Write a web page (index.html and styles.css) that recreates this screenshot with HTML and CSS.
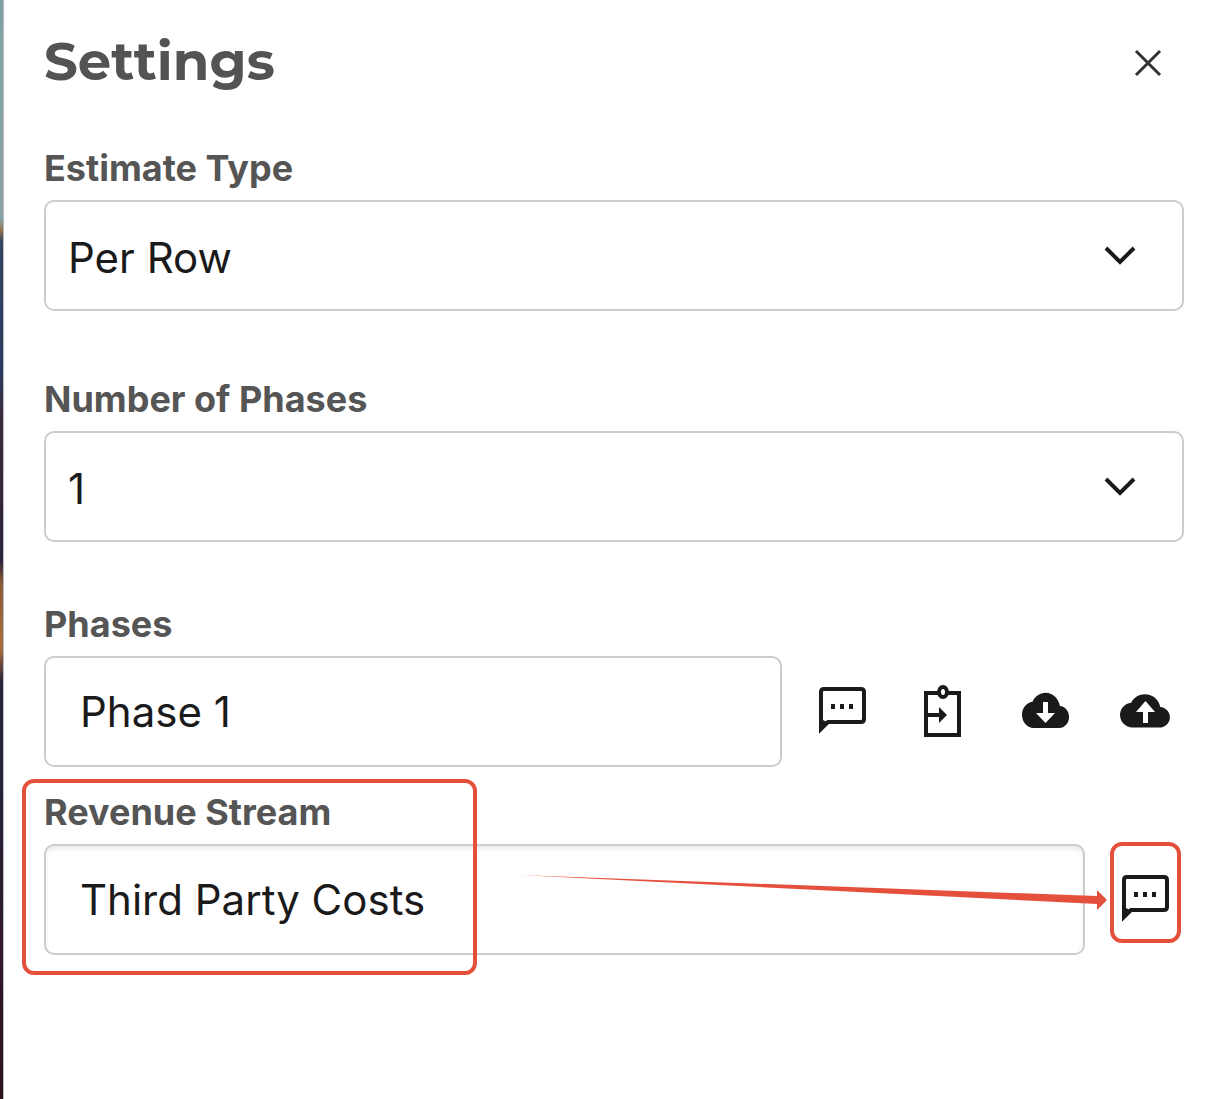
FILE: index.html
```html
<!DOCTYPE html>
<html lang="en">
<head>
<meta charset="utf-8">
<meta name="viewport" content="width=device-width, initial-scale=1">
<title>Settings</title>
<link rel="stylesheet" href="styles.css">
</head>
<body>
<svg class="sprite" aria-hidden="true">
  <symbol id="chat" viewBox="0 0 56 56">
    <path d="M8 45V8q0-3 3-3h37q3 0 3 3v27q0 3-3 3H15z" fill="none" stroke="currentColor" stroke-width="4"/>
    <path d="M6 34v14l10-9z" fill="currentColor"/>
    <path d="M18 20h4v5h-4zM27 20h4v5h-4zM36 20h4v5h-4z" fill="currentColor"/>
  </symbol>
  <symbol id="chevron" viewBox="0 0 32 20">
    <path d="M2 2l14 14L30 2" fill="none" stroke="currentColor" stroke-width="4"/>
  </symbol>
</svg>
<div class="app">
  <div class="backdrop"></div>
  <main class="panel">
    <header class="header">
      <h1 class="title">Settings</h1>
      <button class="close" type="button" aria-label="Close">
        <svg viewBox="0 0 40 40"><path d="M8 10l24 24M32 10L8 34" fill="none" stroke="currentColor" stroke-width="3"/></svg>
      </button>
    </header>
    <form class="form">
      <div class="field field-select">
        <label class="label" for="type">Estimate Type</label>
        <div class="select">
          <select class="control" id="type"><option>Per Row</option></select>
          <svg class="chevron" aria-hidden="true"><use href="#chevron"/></svg>
        </div>
      </div>
      <div class="field">
        <label class="label" for="count">Number of Phases</label>
        <div class="select">
          <select class="control" id="count"><option>1</option></select>
          <svg class="chevron" aria-hidden="true"><use href="#chevron"/></svg>
        </div>
      </div>
      <div class="field field-phases">
        <label class="label" for="phase">Phases</label>
        <div class="row">
          <input class="control" id="phase" type="text" value="Phase 1">
          <div class="actions">
            <button class="icon" type="button" aria-label="Comment"><svg><use href="#chat"/></svg></button>
            <button class="icon" type="button" aria-label="Paste">
              <svg viewBox="0 0 56 56"><path d="M12 9h33v42H12z" fill="none" stroke="currentColor" stroke-width="4"/><ellipse cx="29" cy="8" rx="4" ry="5" fill="#fff" stroke="currentColor" stroke-width="4"/><path d="M10 29h15v-6l8 8-8 8v-6H10z" fill="currentColor"/></svg>
            </button>
            <button class="icon" type="button" aria-label="Download">
              <svg viewBox="0 0 56 56"><path transform="translate(7 0) scale(1.96 2.2)" d="M19.35 10.04C18.67 6.59 15.64 4 12 4 9.11 4 6.6 5.64 5.35 8.04 2.34 8.36 0 10.91 0 14c0 3.31 2.69 6 6 6h13c2.76 0 5-2.24 5-5 0-2.64-2.05-4.78-4.65-4.96z" fill="currentColor"/><path d="M28 18h5v11h7L30.500 39 21 29h7z" fill="#fff"/></svg>
            </button>
            <button class="icon" type="button" aria-label="Upload">
              <svg viewBox="0 0 56 56"><path transform="translate(4 2) scale(2.08 2.08)" d="M19.35 10.04C18.67 6.59 15.64 4 12 4 9.11 4 6.6 5.64 5.35 8.04 2.34 8.36 0 10.91 0 14c0 3.31 2.69 6 6 6h13c2.76 0 5-2.24 5-5 0-2.64-2.05-4.78-4.65-4.96z" fill="currentColor"/><path d="M27 39h5V28h7L29.500 17 20 28h7z" fill="#fff"/></svg>
            </button>
          </div>
        </div>
      </div>
      <div class="field field-stream">
        <label class="label" for="stream">Revenue Stream</label>
        <div class="row">
          <input class="control control-inset" id="stream" type="text" value="Third Party Costs">
          <div class="actions">
            <button class="icon icon-marked" type="button" aria-label="Comment"><svg><use href="#chat"/></svg></button>
          </div>
          <svg class="arrow" viewBox="0 0 588 36" preserveAspectRatio="none" aria-hidden="true"><path d="M0 1L578 22v-6l10 10-10 10v-6z" fill="currentColor"/></svg>
        </div>
        <div class="highlight"></div>
      </div>
    </form>
  </main>
</div>
</body>
</html>
```
FILE: styles.css
```css
* { box-sizing: border-box; }

body {
  margin: 0;
  background: #fff;
  color: #1a1a1a;
  font-family: Inter, "Liberation Sans", sans-serif;
}

.sprite { position: absolute; width: 0; height: 0; }

.app {
  display: flex;
  min-height: 100vh;
}

.backdrop {
  width: 4px;
  border-right: 1px solid #b9bcc4;
  background: linear-gradient(#7fa0a5 0, #8aa2a3 20%, #8f7048 21%, #2f4564 22%, #2b3a5c 34%, #3a2a3c 38%, #2b2338 51%, #8a5a38 53%, #a86f3c 59%, #2b2338 62%, #26223a 72%, #301a28 85%, #2a141e 100%);
}

.panel {
  flex: 1;
  min-width: 0;
  padding: 31px 39px 31px 40px;
}

.header {
  display: flex;
  align-items: center;
  justify-content: space-between;
  padding-right: 16px;
  margin-bottom: 53px;
}

.title {
  margin: 0;
  color: #535353;
  font-family: Montserrat, Inter, "Liberation Sans", sans-serif;
  font-size: 53px;
  font-weight: 700;
  line-height: 60px;
}

button {
  padding: 0;
  border: 0;
  background: none;
  color: #1a1a1a;
  cursor: pointer;
}

button svg {
  display: block;
  width: 100%;
  height: 100%;
}

.close { width: 40px; height: 40px; color: #333; }

.field {
  position: relative;
  margin-top: 64px;
}

.field-select { margin-top: 0; }
.field-phases { margin-top: 58px; }
.field-stream { margin-top: 21px; }

.label {
  display: block;
  margin-bottom: 8px;
  color: #555;
  font-size: 36px;
  font-weight: 700;
  line-height: 48px;
}

.select {
  display: grid;
  align-items: center;
}

.select > * { grid-area: 1 / 1; }

.control {
  flex: 1;
  width: 100%;
  min-width: 0;
  height: 111px;
  padding: 0 34px 0;
  border: 2px solid #ccc;
  border-radius: 10px;
  background: #fff;
  color: #1a1a1a;
  font: 400 42px/52px Inter, "Liberation Sans", sans-serif;
  appearance: none;
}

.select .control { padding: 4px 22px 0; }

.control-inset { box-shadow: inset 0 3px 5px rgba(0, 0, 0, .08); }

.chevron {
  justify-self: end;
  width: 32px;
  height: 20px;
  margin-right: 48px;
  pointer-events: none;
}

.row {
  position: relative;
  display: flex;
  align-items: center;
  gap: 31px;
  padding-right: 12px;
}

.actions { display: flex; gap: 45px; }

.icon {
  position: relative;
  width: 56px;
  height: 56px;
}

/* Callouts drawn over the form */
.highlight,
.icon-marked::after {
  position: absolute;
  border: 4px solid #e5503d;
  border-radius: 12px;
  pointer-events: none;
}

.highlight {
  top: -9px;
  bottom: -20px;
  left: -22px;
  width: 455px;
}

.icon-marked::after {
  content: "";
  inset: -30px -9px -15px -6px;
}

.arrow {
  position: absolute;
  top: 30px;
  right: 77px;
  left: 475px;
  width: calc(100% - 552px);
  height: 36px;
  color: #e5503d;
  pointer-events: none;
}
```
